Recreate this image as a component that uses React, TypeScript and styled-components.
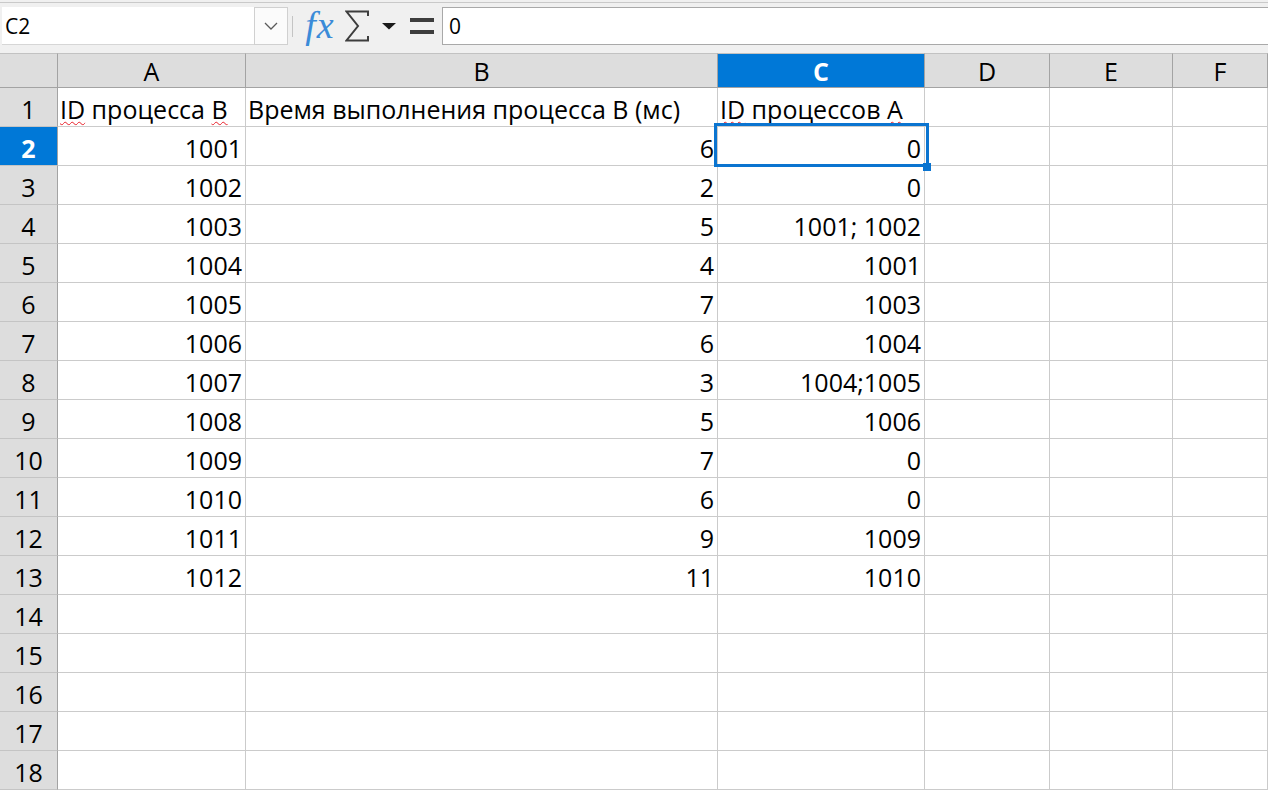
import React from "react";
import styled, { createGlobalStyle } from "styled-components";

const Global = createGlobalStyle`
  html, body { margin: 0; padding: 0; background: #ffffff; overflow: hidden; }
  body { font-family: "Open Sans", "Noto Sans", sans-serif; }
  * { box-sizing: border-box; }
`;

const Page = styled.div`
  width: 1268px;
  height: 790px;
  overflow: hidden;
  background: #f0f0f0;
  padding-top: 2px;
  display: flex;
  flex-direction: column;
`;

const Toolbar = styled.div`
  height: 52px;
  border-top: 1px solid #c9c9c9;
  display: flex;
  align-items: flex-start;
  padding: 4px 0 0 2px;
  background: #f0f0f0;
`;

const NameBox = styled.div`
  width: 252px;
  height: 38px;
  background: #ffffff;
  border-bottom: 1px solid #d6d6d6;
  display: flex;
  align-items: center;
  padding-left: 3px;
  font-size: 21px;
  color: #000;
`;

const DropButton = styled.div`
  width: 34px;
  height: 38px;
  background: #fbfbfb;
  border: 1px solid #d0d0d0;
  display: flex;
  align-items: center;
  justify-content: center;
`;

const Slot = styled.div<{ $w: number }>`
  width: ${(p) => p.$w}px;
  height: 38px;
  display: flex;
  align-items: center;
  justify-content: center;
  flex-shrink: 0;
`;

const VSep = styled.div`
  width: 1px;
  height: 21px;
  background: #c4c4c4;
`;

const Fx = styled.span`
  font-family: "Liberation Serif", "DejaVu Serif", serif;
  font-style: italic;
  font-size: 38px;
  line-height: 1;
  color: #3b8bd8;
  letter-spacing: 1px;
  margin-top: -2px;
  margin-left: 4px;
`;

const FormulaInput = styled.div`
  flex: 1;
  height: 38px;
  margin-left: 1px;
  background: #ffffff;
  border: 1px solid #a9a9a9;
  border-right: none;
  display: flex;
  align-items: center;
  padding-left: 6px;
  font-size: 21px;
  color: #000;
`;

const Grid = styled.div`
  display: grid;
  grid-template-columns: 58px 188px 472px 207px 125px 123px 1fr;
  grid-template-rows: 35px;
  grid-auto-rows: 39px;
  background: #ffffff;
  font-size: 25px;
  color: #000;
`;

const HeaderBase = styled.div<{ $active?: boolean }>`
  background: ${(p) => (p.$active ? "#0078d7" : "#dddddd")};
  color: ${(p) => (p.$active ? "#ffffff" : "#000000")};
  font-weight: ${(p) => (p.$active ? 700 : 400)};
  display: flex;
  align-items: center;
  justify-content: center;
  white-space: nowrap;
`;

const Corner = styled(HeaderBase)`
  border-top: 1px solid #c2c2c2;
  border-right: 1px solid #a3a3a3;
  border-bottom: 1px solid #a3a3a3;
`;

const ColHeader = styled(HeaderBase)`
  border-top: 1px solid #c2c2c2;
  border-right: 1px solid #a3a3a3;
  border-bottom: 1px solid #a3a3a3;
  padding-top: 1px;
`;

const RowHeader = styled(HeaderBase)`
  border-right: 1px solid #a3a3a3;
  border-bottom: 1px solid #c4c4c4;
  padding-top: 3px;
`;

const Cell = styled.div<{ $right?: boolean; $selected?: boolean }>`
  border-right: 1px solid #cbcbcb;
  border-bottom: 1px solid #cbcbcb;
  display: flex;
  align-items: center;
  justify-content: ${(p) => (p.$right ? "flex-end" : "flex-start")};
  padding: 3px 3px 0 2px;
  white-space: nowrap;
  position: ${(p) => (p.$selected ? "relative" : "static")};
`;

const CellText = styled.span`
  white-space: pre;
`;

const Squiggle = styled.span`
  text-decoration-line: underline;
  text-decoration-style: wavy;
  text-decoration-color: #e8202a;
  text-decoration-thickness: 1.4px;
  text-underline-offset: 2px;
`;

const SelectionBox = styled.div`
  position: absolute;
  left: -4px;
  top: -4px;
  right: -5px;
  bottom: -2px;
  border: 3px solid #0a74d0;
  pointer-events: none;
  z-index: 2;
`;

const FillHandle = styled.div`
  position: absolute;
  right: -5px;
  bottom: -7px;
  width: 8px;
  height: 8px;
  background: #0a74d0;
`;

const Chevron = () => (
  <svg width="14" height="8" viewBox="0 0 14 8">
    <path d="M1 1 L7 7 L13 1" fill="none" stroke="#5a5a5a" strokeWidth="1.3" />
  </svg>
);

const Sigma = () => (
  <svg width="24" height="32" viewBox="0 0 24 32">
    <path
      d="M23 6 V1.5 H1.5 L13 16 L1.5 30.5 H23 V26"
      fill="none"
      stroke="#3d3d3d"
      strokeWidth="2"
      strokeLinejoin="miter"
    />
  </svg>
);

const DownTri = () => (
  <svg width="14" height="7" viewBox="0 0 14 7">
    <path d="M0 0 H14 L7 6.5 Z" fill="#1a1a1a" />
  </svg>
);

const Equals = () => (
  <svg width="24" height="16" viewBox="0 0 24 16">
    <rect x="0" y="0" width="24" height="4" fill="#3d3d3d" />
    <rect x="0" y="12" width="24" height="4" fill="#3d3d3d" />
  </svg>
);

type Row = [React.ReactNode, React.ReactNode, React.ReactNode] | null;

const header: [React.ReactNode, React.ReactNode, React.ReactNode] = [
  <CellText>
    <Squiggle>ID</Squiggle> процесса <Squiggle>B</Squiggle>
  </CellText>,
  <CellText>Время выполнения процесса В (мс)</CellText>,
  <CellText>
    <Squiggle>ID</Squiggle> процессов <Squiggle>A</Squiggle>
  </CellText>,
];

const data: [string, string, string][] = [
  ["1001", "6", "0"],
  ["1002", "2", "0"],
  ["1003", "5", "1001; 1002"],
  ["1004", "4", "1001"],
  ["1005", "7", "1003"],
  ["1006", "6", "1004"],
  ["1007", "3", "1004;1005"],
  ["1008", "5", "1006"],
  ["1009", "7", "0"],
  ["1010", "6", "0"],
  ["1011", "9", "1009"],
  ["1012", "11", "1010"],
];

const columns = ["A", "B", "C", "D", "E", "F"];

export default function App() {
  const rows: Row[] = [
    header,
    ...data.map(
      (d) =>
        d.map((v) => <CellText>{v}</CellText>) as [
          React.ReactNode,
          React.ReactNode,
          React.ReactNode
        ]
    ),
    null,
    null,
    null,
    null,
    null,
  ];
  return (
    <>
      <Global />
      <Page>
        <Toolbar>
          <NameBox>C2</NameBox>
          <DropButton>
            <Chevron />
          </DropButton>
          <Slot $w={9}>
            <VSep />
          </Slot>
          <Slot $w={42}>
            <Fx>fx</Fx>
          </Slot>
          <Slot $w={36}>
            <Sigma />
          </Slot>
          <Slot $w={28}>
            <DownTri />
          </Slot>
          <Slot $w={38}>
            <Equals />
          </Slot>
          <FormulaInput>0</FormulaInput>
        </Toolbar>
        <Grid>
          <Corner />
          {columns.map((c) => (
            <ColHeader key={c} $active={c === "C"}>
              {c}
            </ColHeader>
          ))}
          {rows.map((r, i) => {
            const n = i + 1;
            const isHeader = i === 0;
            return (
              <React.Fragment key={n}>
                <RowHeader $active={n === 2}>{n}</RowHeader>
                <Cell $right={!isHeader}>{r ? r[0] : null}</Cell>
                <Cell $right={!isHeader}>{r ? r[1] : null}</Cell>
                <Cell $right={!isHeader} $selected={n === 2}>
                  {r ? r[2] : null}
                  {n === 2 && (
                    <SelectionBox>
                      <FillHandle />
                    </SelectionBox>
                  )}
                </Cell>
                <Cell />
                <Cell />
                <Cell />
              </React.Fragment>
            );
          })}
        </Grid>
      </Page>
    </>
  );
}
